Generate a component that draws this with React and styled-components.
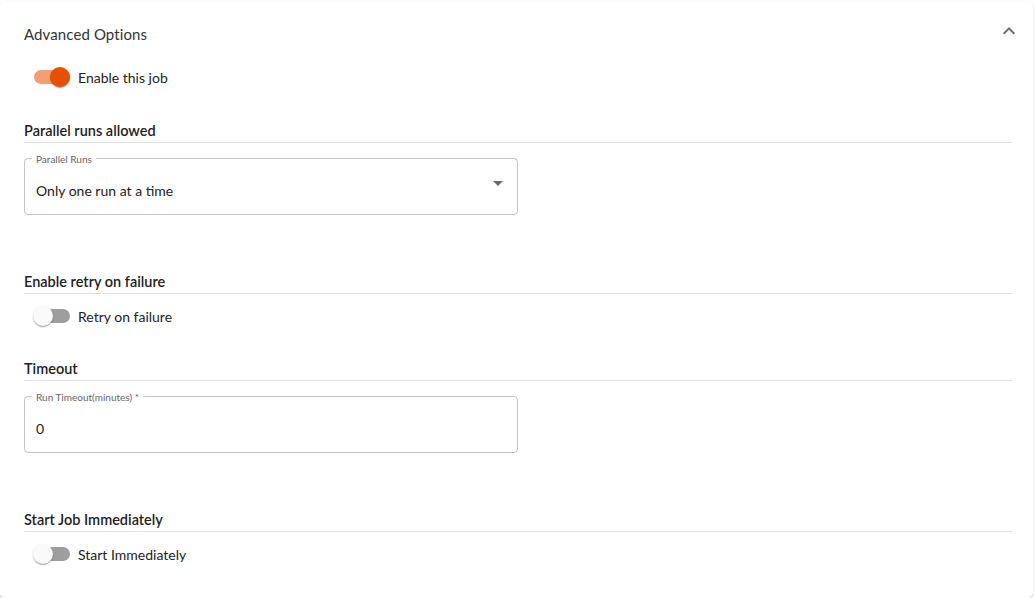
import React from 'react';
import styled, { createGlobalStyle } from 'styled-components';

const GlobalStyle = createGlobalStyle`
  html, body {
    margin: 0;
    padding: 0;
    background: #ffffff;
  }
  body {
    font-family: 'Lato', 'Noto Sans', sans-serif;
    color: #222;
  }
`;

const Card = styled.div`
  margin-top: 2px;
  width: 1033px;
  height: 595px;
  box-sizing: border-box;
  background: #fff;
  border-radius: 4px;
  box-shadow: 0px 2px 1px -1px rgba(0, 0, 0, 0.2), 0px 1px 1px 0px rgba(0, 0, 0, 0.14),
    0px 1px 3px 0px rgba(0, 0, 0, 0.12);
  padding: 0 21px 0 24px;
`;

const Summary = styled.div`
  height: 64px;
  display: flex;
  align-items: center;
  justify-content: space-between;
`;

const SummaryTitle = styled.span`
  font-size: 15px;
  color: #333;
  letter-spacing: 0.1px;
`;

const ExpandIcon = styled.svg`
  width: 24px;
  height: 24px;
  fill: #6b6b6b;
  margin-right: -9px;
  margin-top: -6px;
`;

const SwitchRow = styled.label`
  display: flex;
  align-items: center;
  height: 22px;
  margin-top: ${(p) => p.$top || 0}px;
  padding-left: 9px;
  cursor: pointer;
`;

const SwitchBox = styled.span`
  position: relative;
  width: 38px;
  height: 20px;
  flex-shrink: 0;
`;

const Track = styled.span`
  position: absolute;
  left: 1px;
  top: 3px;
  width: 36px;
  height: 14px;
  border-radius: 7px;
  background: ${(p) => (p.$on ? '#f2a073' : '#9e9e9e')};
`;

const Thumb = styled.span`
  position: absolute;
  top: 0;
  left: ${(p) => (p.$on ? 17 : 0)}px;
  width: 20px;
  height: 20px;
  border-radius: 50%;
  background: ${(p) => (p.$on ? '#e65100' : '#fafafa')};
  box-shadow: 0px 2px 1px -1px rgba(0, 0, 0, 0.2), 0px 1px 1px 0px rgba(0, 0, 0, 0.14),
    0px 1px 3px 0px rgba(0, 0, 0, 0.12);
`;

const SwitchLabel = styled.span`
  margin-left: 7px;
  font-size: 14px;
  color: #222;
`;

const SectionHeader = styled.div`
  margin-top: ${(p) => p.$top}px;
  line-height: 22px;
  border-bottom: 1px solid #e0e0e0;
  font-size: 14.5px;
  font-weight: 600;
  color: #222;
`;

const Field = styled.div`
  position: relative;
  box-sizing: border-box;
  margin-top: 15px;
  width: 494px;
  height: 57px;
  padding: 7px 11px 0;
  border: 1px solid rgba(0, 0, 0, 0.23);
  border-radius: 4px;
  display: flex;
  align-items: center;
`;

const FloatLabel = styled.span`
  position: absolute;
  top: -6px;
  left: 7px;
  padding: 0 4px;
  background: #fff;
  font-size: 10px;
  line-height: 12px;
  color: #666;
`;

const FieldValue = styled.span`
  flex: 1;
  font-size: 14px;
  color: #222;
`;

const DropArrow = styled.svg`
  width: 24px;
  height: 24px;
  fill: #6b6b6b;
  margin-right: -4px;
  margin-top: -14px;
`;

const Toggle = ({ on, label, top }) => (
  <SwitchRow $top={top}>
    <SwitchBox>
      <Track $on={on} />
      <Thumb $on={on} />
    </SwitchBox>
    <SwitchLabel>{label}</SwitchLabel>
  </SwitchRow>
);

const App = () => (
  <>
    <GlobalStyle />
    <Card>
      <Summary>
        <SummaryTitle>Advanced Options</SummaryTitle>
        <ExpandIcon viewBox="0 0 24 24">
          <path d="M7.41 15.41 12 10.83l4.59 4.58L18 14l-6-6-6 6z" />
        </ExpandIcon>
      </Summary>

      <Toggle on label="Enable this job" />

      <SectionHeader $top={32}>Parallel runs allowed</SectionHeader>
      <Field>
        <FloatLabel>Parallel Runs</FloatLabel>
        <FieldValue>Only one run at a time</FieldValue>
        <DropArrow viewBox="0 0 24 24">
          <path d="M7 10l5 5 5-5z" />
        </DropArrow>
      </Field>

      <SectionHeader $top={56}>Enable retry on failure</SectionHeader>
      <Toggle label="Retry on failure" top={11} />

      <SectionHeader $top={31}>Timeout</SectionHeader>
      <Field>
        <FloatLabel>Run Timeout(minutes) *</FloatLabel>
        <FieldValue>0</FieldValue>
      </Field>

      <SectionHeader $top={56}>Start Job Immediately</SectionHeader>
      <Toggle label="Start Immediately" top={11} />
    </Card>
  </>
);

export default App;
